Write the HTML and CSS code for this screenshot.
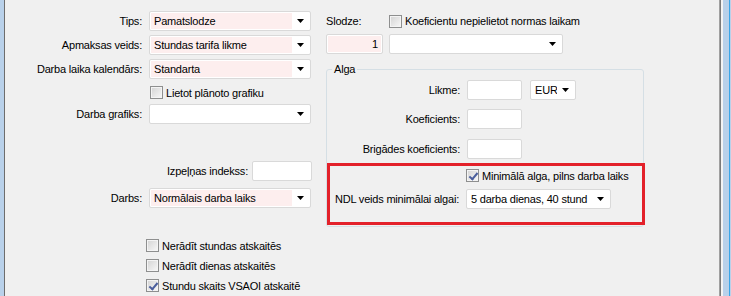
FILE: index.html
```html
<!DOCTYPE html>
<html lang="lv">
<head>
<meta charset="UTF-8" />
<title>Darba attiecības</title>
<link rel="stylesheet" href="styles.css">
</head>
<body>
<div class="window">
  <div class="edge-left"></div>

  <div class="panel">
    <!-- left column -->
    <div class="col-left">
      <div class="stack">
        <div class="row">
          <span class="lbl">Tips:</span>
          <div class="select req"><span class="val">Pamatslodze</span><span class="arrow"></span></div>
        </div>
        <div class="row">
          <span class="lbl">Apmaksas veids:</span>
          <div class="select req"><span class="val">Stundas tarifa likme</span><span class="arrow"></span></div>
        </div>
        <div class="row">
          <span class="lbl">Darba laika kalendārs:</span>
          <div class="select req"><span class="val">Standarta</span><span class="arrow"></span></div>
        </div>
      </div>

      <div class="check plan"><span class="box"></span>Lietot plānoto grafiku</div>

      <div class="row schedule">
        <span class="lbl">Darba grafiks:</span>
        <div class="select"><span class="val"></span><span class="arrow"></span></div>
      </div>

      <div class="row index">
        <span>Izpeļņas indekss:</span>
        <div class="input idx"></div>
      </div>

      <div class="row work">
        <span class="lbl">Darbs:</span>
        <div class="select req"><span class="val">Normālais darba laiks</span><span class="arrow"></span></div>
      </div>

      <div class="checks">
        <div class="check"><span class="box"></span>Nerādīt stundas atskaitēs</div>
        <div class="check"><span class="box"></span>Nerādīt dienas atskaitēs</div>
        <div class="check"><span class="box on"></span>Stundu skaits VSAOI atskaitē</div>
      </div>
    </div>

    <!-- right column -->
    <div class="col-right">
      <div class="row">
        <span class="lbl-load">Slodze:</span>
        <div class="check"><span class="box"></span>Koeficientu nepielietot normas laikam</div>
      </div>
      <div class="row load">
        <div class="input num req">1</div>
        <div class="select wide"><span class="val"></span><span class="arrow"></span></div>
      </div>

      <fieldset class="group">
        <legend>Alga</legend>
        <div class="grow first">
          <span class="glbl">Likme:</span>
          <div class="input small"></div>
          <div class="select cur"><span class="val">EUR</span><span class="arrow"></span></div>
        </div>
        <div class="grow coef">
          <span class="glbl">Koeficients:</span>
          <div class="input small"></div>
        </div>
        <div class="grow brig">
          <span class="glbl">Brigādes koeficients:</span>
          <div class="input small"></div>
        </div>

        <div class="highlight">
          <div class="check minwage"><span class="box on"></span>Minimālā alga, pilns darba laiks</div>
          <div class="grow ndl">
            <span class="nlbl">NDL veids minimālai algai:</span>
            <div class="select days"><span class="val">5 darba dienas, 40 stund</span><span class="arrow"></span></div>
          </div>
        </div>
      </fieldset>
    </div>
  </div>

  <div class="edge-right"></div>
</div>
</body>
</html>
```

FILE: styles.css
```css
* {
  margin: 0; padding: 0; box-sizing: border-box;
}
body {
  background: #f0f0f0;
  font-family: "Liberation Sans", Arial, sans-serif;
  font-size: 11px;
  letter-spacing: -0.2px;
  color: #000;
  overflow: hidden;
}
.window {
  display: flex;
  width: 731px;
  height: 296px;
}

/* window frame */
.edge-left {
  width: 5px;
  background: linear-gradient(to right, #b9d1ea 0 4px, #6d6d6d 4px 5px);
}
.edge-right {
  width: 12px;
  background: linear-gradient(to right, #a0a0a0 0 1px, #7a7a7a 1px 2px, #f4f4f4 2px 4px, #b9d1ea 4px 10px, #3aa6e8 10px 11px, #b9d1ea 11px 12px);
}
.panel {
  flex: 1;
  display: flex;
  padding-top: 11px;
}

/* generic rows */
.row {
  display: flex;
  align-items: center;
  height: 20px;
}
.lbl {
  width: 137px;
  margin-right: 7px;
  text-align: right;
  white-space: nowrap;
}

/* combo box */
.select {
  display: flex;
  width: 162px;
  height: 20px;
  padding: 1px;
  background: #fff;
  border: 1px solid #d9d9d9;
  border-radius: 2px;
}
.select .val {
  flex: 1;
  padding-left: 3px;
  line-height: 16px;
  white-space: nowrap;
  overflow: hidden;
}
.select.req .val {
  background: #fdeeee;
}
.select .arrow {
  width: 17px;
  display: flex;
  align-items: center;
  justify-content: center;
}
.select .arrow::after {
  content: "";
  width: 7px;
  height: 4px;
  background: #000;
  clip-path: polygon(0 0, 100% 0, 50% 100%);
}

/* text box */
.input {
  height: 20px;
  background: #fff;
  border: 1px solid #d9d9d9;
  border-radius: 2px;
}
.input.req {
  background: #fdeeee;
  box-shadow: inset 0 0 0 1px #fff;
}

/* check box */
.check {
  display: flex;
  align-items: center;
  height: 13px;
  white-space: nowrap;
}
.box {
  width: 13px;
  height: 13px;
  margin-right: 3px;
  border: 1px solid #8e8f8f;
  background: linear-gradient(135deg, #d3d3d3, #f8f8f8);
  box-shadow: inset 0 0 0 1px #f4f4f4;
  position: relative;
}
.box.on::after {
  content: "";
  position: absolute;
  left: 4px;
  top: 1px;
  width: 3px;
  height: 7px;
  border: solid #4a5e9c;
  border-width: 0 2px 2px 0;
  transform: rotate(40deg);
}

/* left column */
.col-left {
  width: 306px;
  display: flex;
  flex-direction: column;
}
.stack {
  display: flex;
  flex-direction: column;
  gap: 4px;
}
.plan {
  margin-top: 7px;
  padding-left: 145px;
}
.schedule {
  margin-top: 5px;
}
.index {
  margin-top: 37px;
  justify-content: flex-end;
  gap: 4px;
}
.input.idx {
  width: 60px;
  margin-right: -1px;
}
.work {
  margin-top: 7px;
}
.checks {
  margin-top: 31px;
  padding-left: 141px;
  display: flex;
  flex-direction: column;
  gap: 7px;
}

/* right column */
.col-right {
  width: 318px;
  margin-left: 15px;
  display: flex;
  flex-direction: column;
}
.lbl-load {
  width: 63px;
}
.load {
  margin-top: 3px;
}
.input.num {
  width: 57px;
  margin-right: 6px;
  text-align: right;
  padding-right: 4px;
  line-height: 18px;
}
.select.wide {
  width: 174px;
}

/* Alga group */
.group {
  margin-top: 8px;
  min-width: 0;
  border: 1px solid #d5dfe5;
  border-radius: 3px;
}
.group legend {
  margin-left: 5px;
  padding: 0 2px;
  line-height: 14px;
}
.grow {
  display: flex;
  align-items: center;
  height: 20px;
}
.glbl {
  width: 133px;
  margin-right: 7px;
  text-align: right;
  white-space: nowrap;
}
.input.small {
  width: 55px;
}
.select.cur {
  width: 46px;
  margin-left: 8px;
}
.first { margin-top: 4px; }
.coef { margin-top: 9px; }
.brig { margin-top: 10px; }

.highlight {
  margin: 4px -2px 1px 0;
  padding: 3px 0 13px;
  border: 3px solid #e3212a;
}
.minwage {
  padding-left: 136px;
}
.ndl {
  margin-top: 7px;
}
.nlbl {
  width: 129px;
  margin-right: 7px;
  text-align: right;
  white-space: nowrap;
}
.select.days {
  width: 145px;
}
```
